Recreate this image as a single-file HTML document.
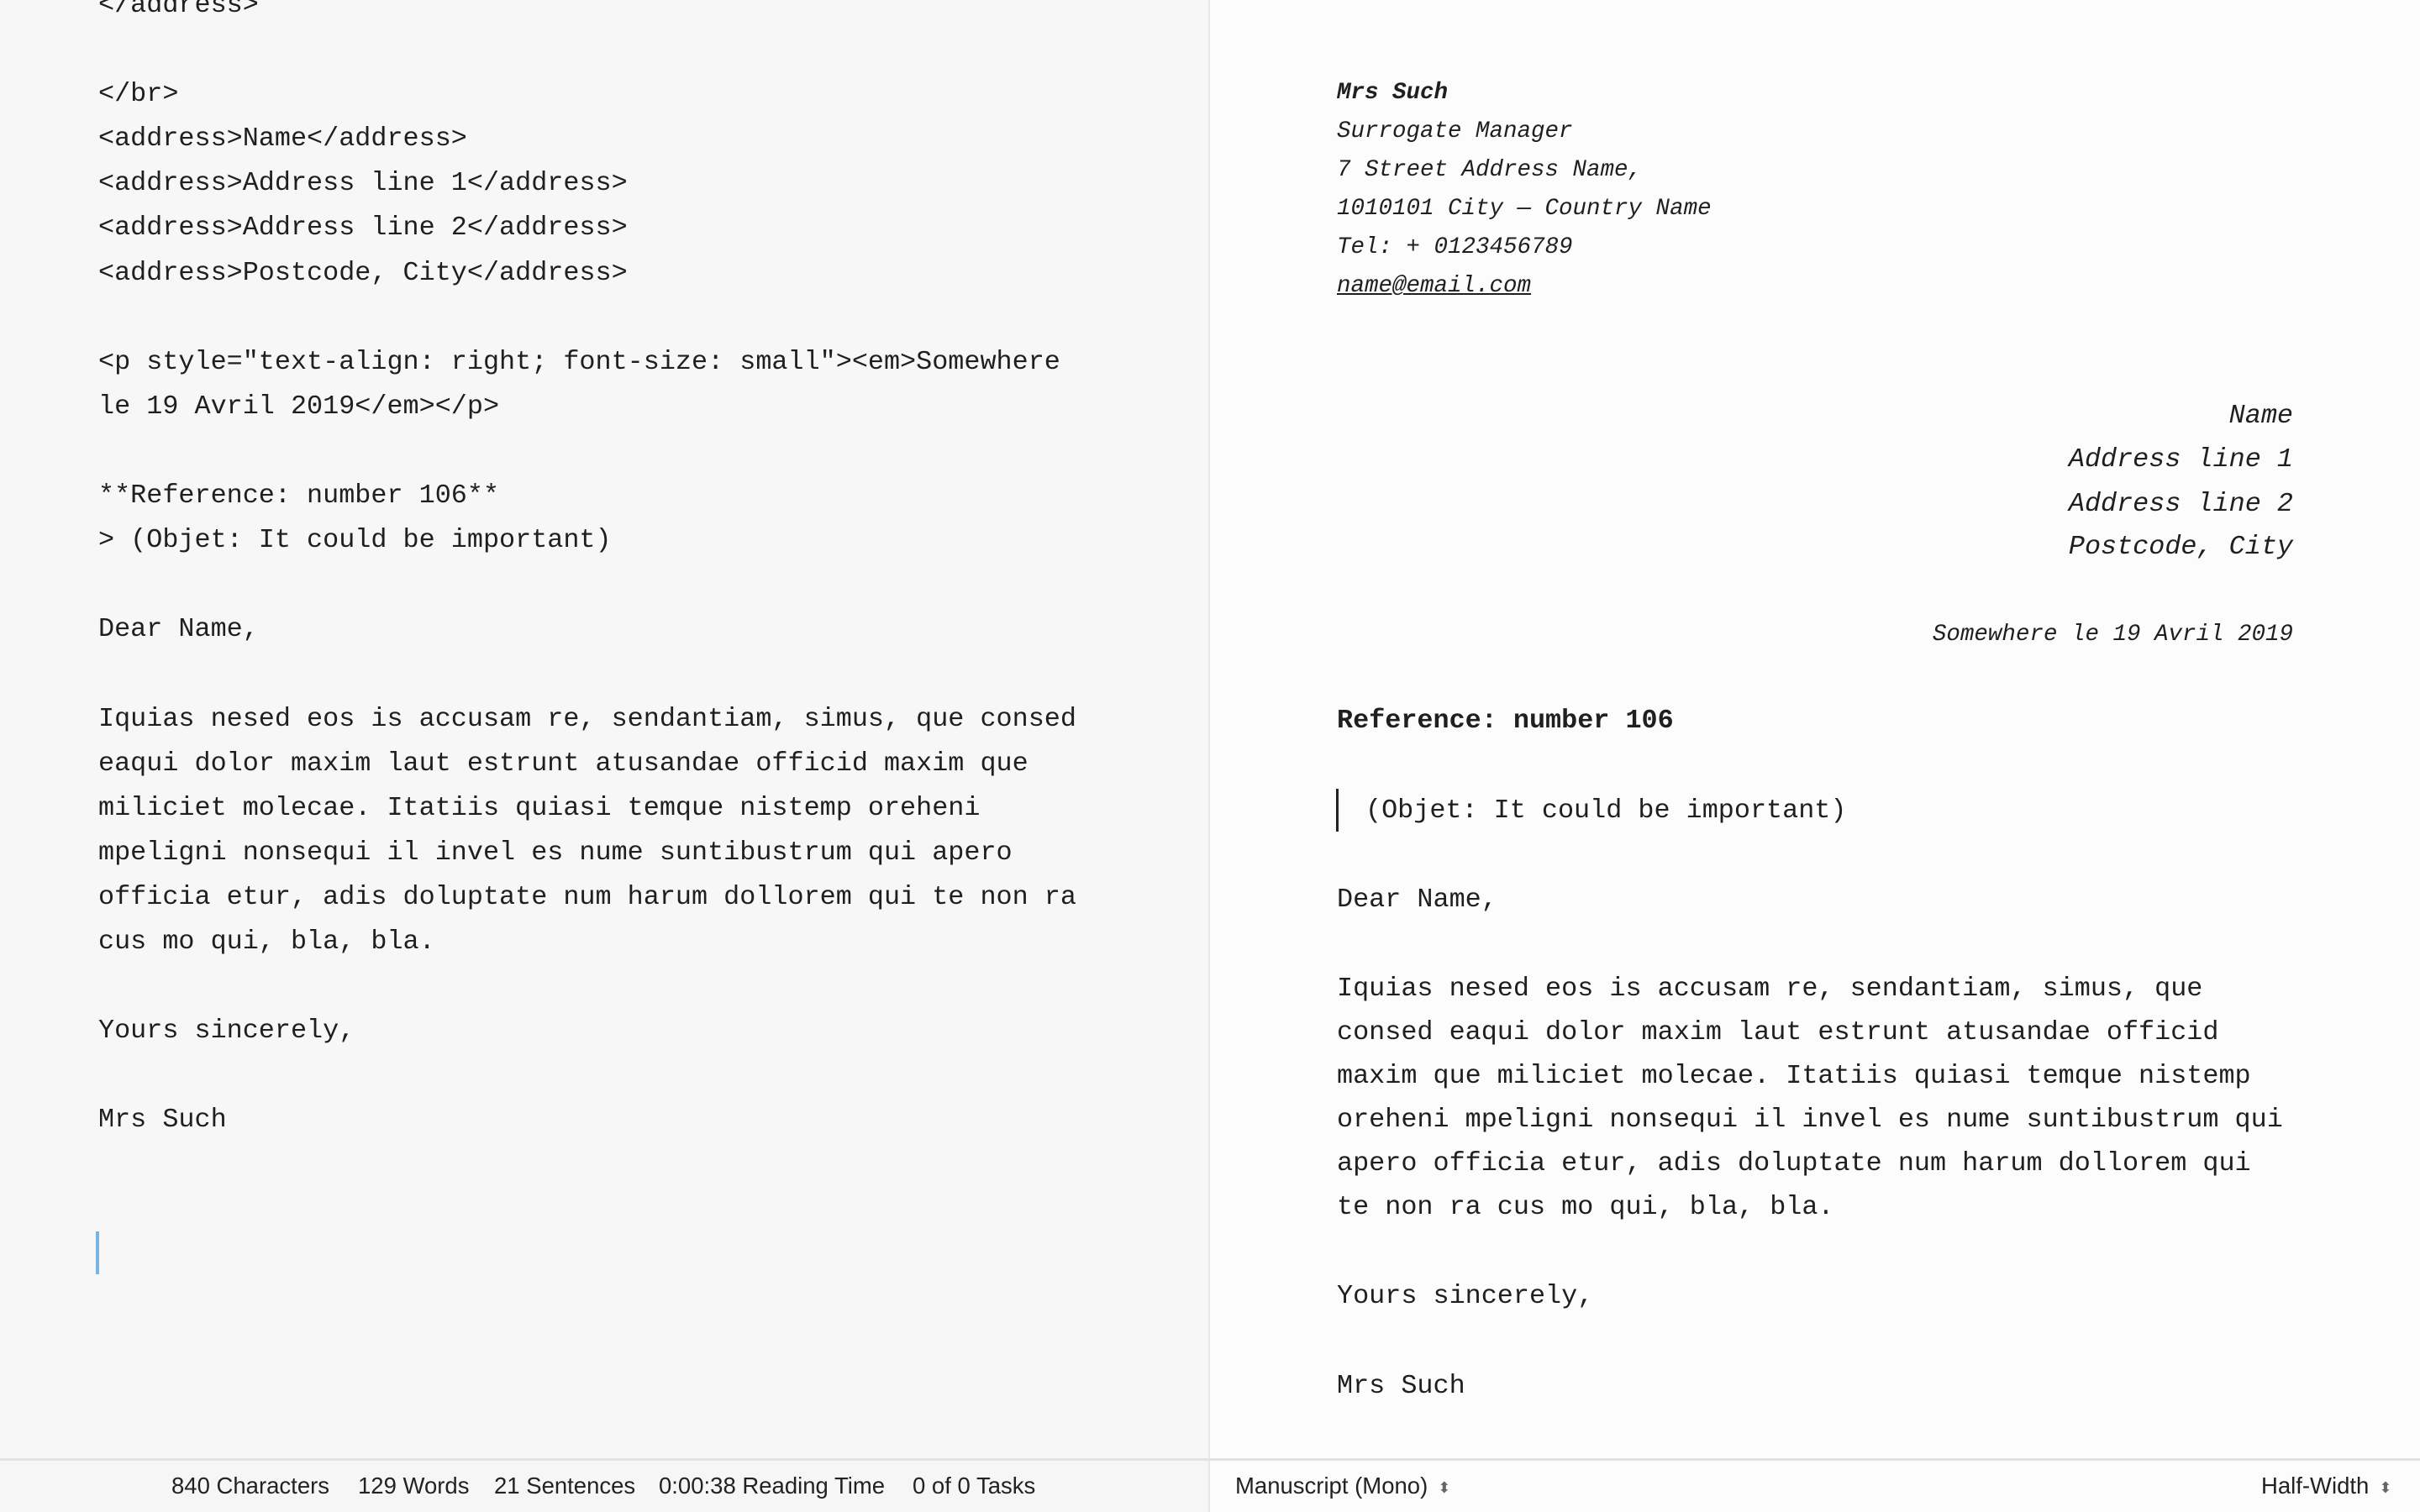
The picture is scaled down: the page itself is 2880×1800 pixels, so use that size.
<!DOCTYPE html>
<html><head><meta charset="utf-8"><style>
html,body{margin:0;padding:0;width:2880px;height:1800px;overflow:hidden;}
body{position:relative;background:#fcfcfc;color:#1f1f1f;font-family:"Liberation Mono",monospace;}
#left{position:absolute;left:0;top:0;width:1438px;height:1736px;background:#f7f7f7;}
#div{position:absolute;left:1438px;top:0;width:2px;height:1800px;background:#e8e8e8;}
#status{position:absolute;left:0;top:1736px;width:2880px;height:64px;border-top:3px solid #e2e2e2;box-sizing:border-box;}
#sl{position:absolute;left:0;top:0;width:1438px;height:64px;background:#f6f6f6;}
.st{position:absolute;top:1737px;height:64px;line-height:64px;font-family:"Liberation Sans",sans-serif;font-size:27.5px;color:#222;white-space:nowrap;}
pre{margin:0;position:absolute;left:117px;top:-20px;font-size:31.8px;line-height:53.1px;font-family:"Liberation Mono",monospace;color:#1f1f1f;}
.r{position:absolute;white-space:nowrap;font-size:31.8px;line-height:52px;margin-top:2px;}
.h{position:absolute;left:1591px;font-size:27.5px;line-height:46px;font-style:italic;white-space:nowrap;margin-top:3px;}
.ra{position:absolute;right:151px;font-style:italic;font-size:31.8px;line-height:52px;white-space:nowrap;text-align:right;margin-top:3px;}
.arr{font-size:18px;color:#666;vertical-align:middle;margin-left:12px;}
</style></head><body>
<div id="left"></div>
<pre>&lt;/address&gt;

&lt;/br&gt;
&lt;address&gt;Name&lt;/address&gt;
&lt;address&gt;Address line 1&lt;/address&gt;
&lt;address&gt;Address line 2&lt;/address&gt;
&lt;address&gt;Postcode, City&lt;/address&gt;

&lt;p style="text-align: right; font-size: small"&gt;&lt;em&gt;Somewhere
le 19 Avril 2019&lt;/em&gt;&lt;/p&gt;

**Reference: number 106**
&gt; (Objet: It could be important)

Dear Name,

Iquias nesed eos is accusam re, sendantiam, simus, que consed
eaqui dolor maxim laut estrunt atusandae officid maxim que
miliciet molecae. Itatiis quiasi temque nistemp oreheni
mpeligni nonsequi il invel es nume suntibustrum qui apero
officia etur, adis doluptate num harum dollorem qui te non ra
cus mo qui, bla, bla.

Yours sincerely,

Mrs Such</pre>
<div style="position:absolute;left:114px;top:1466px;width:4px;height:51px;background:#7ab3e0"></div>
<div id="div"></div>

<div class="h" style="top:85px;font-weight:bold">Mrs Such</div>
<div class="h" style="top:131px">Surrogate Manager</div>
<div class="h" style="top:177px">7 Street Address Name,</div>
<div class="h" style="top:223px">1010101 City — Country Name</div>
<div class="h" style="top:269px">Tel: + 0123456789</div>
<div class="h" style="top:315px;text-decoration:underline">name@email.com</div>

<div class="ra" style="top:466px">Name</div>
<div class="ra" style="top:518px">Address line 1</div>
<div class="ra" style="top:571px">Address line 2</div>
<div class="ra" style="top:622px">Postcode, City</div>
<div class="ra" style="top:730px;font-size:27.5px;line-height:46px">Somewhere le 19 Avril 2019</div>

<div class="r" style="left:1591px;top:830px;font-weight:bold">Reference: number 106</div>
<div style="position:absolute;left:1590px;top:939px;width:3px;height:51px;background:#222"></div>
<div class="r" style="left:1625px;top:937px">(Objet: It could be important)</div>
<div class="r" style="left:1591px;top:1043px">Dear Name,</div>
<div class="r" style="left:1591px;top:1149px;white-space:pre">Iquias nesed eos is accusam re, sendantiam, simus, que
consed eaqui dolor maxim laut estrunt atusandae officid
maxim que miliciet molecae. Itatiis quiasi temque nistemp
oreheni mpeligni nonsequi il invel es nume suntibustrum qui
apero officia etur, adis doluptate num harum dollorem qui
te non ra cus mo qui, bla, bla.</div>
<div class="r" style="left:1591px;top:1515px">Yours sincerely,</div>
<div class="r" style="left:1591px;top:1622px">Mrs Such</div>

<div id="status"><div id="sl"></div></div>
<div class="st" style="left:204px">840 Characters</div>
<div class="st" style="left:426px">129 Words</div>
<div class="st" style="left:588px">21 Sentences</div>
<div class="st" style="left:784px">0:00:38 Reading Time</div>
<div class="st" style="left:1086px">0 of 0 Tasks</div>
<div class="st" style="left:1470px">Manuscript (Mono)<span class="arr">⬍</span></div>
<div class="st" style="left:2691px">Half-Width<span class="arr">⬍</span></div>
</body></html>
